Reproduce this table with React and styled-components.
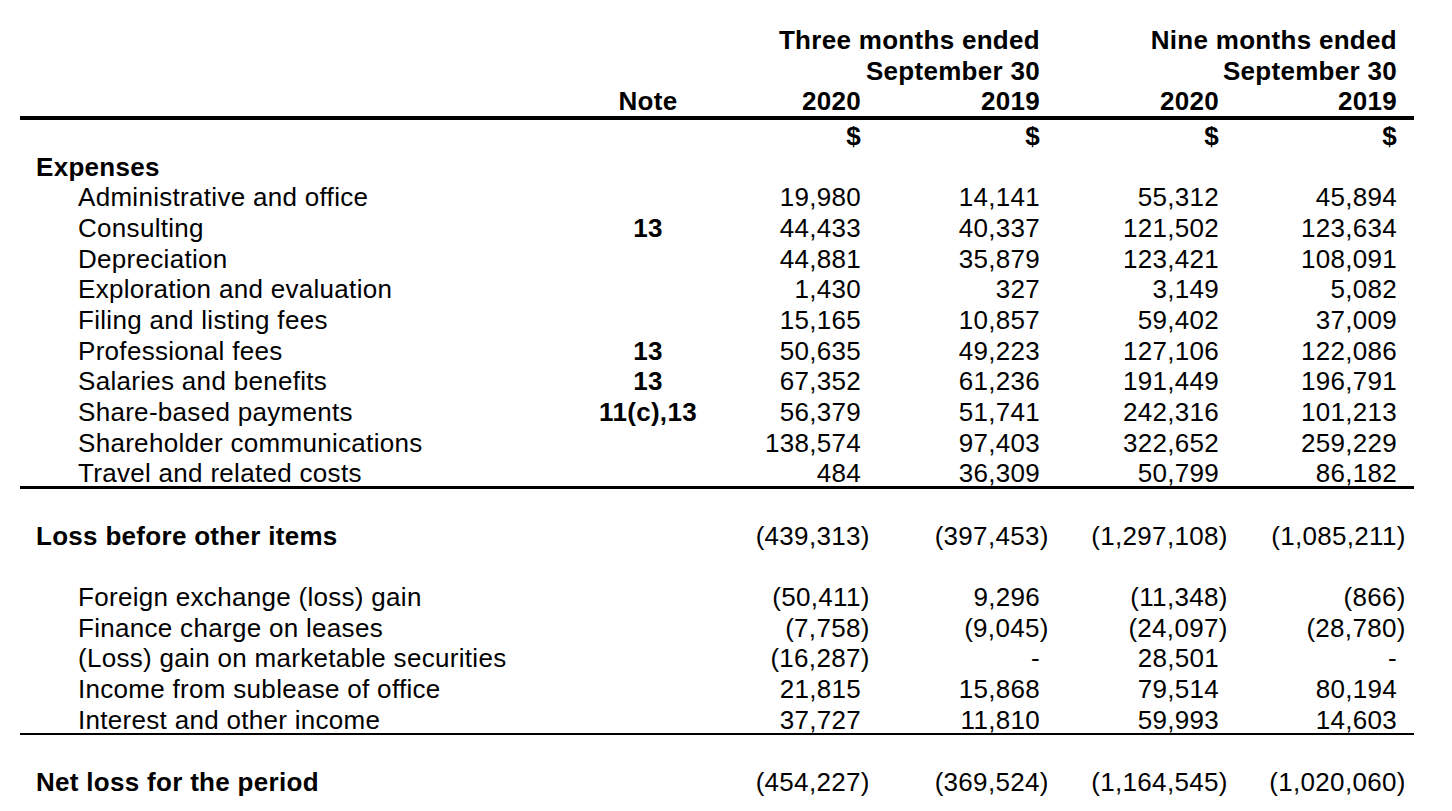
import React from "react";
import styled, { createGlobalStyle } from "styled-components";

const GlobalStyle = createGlobalStyle`
  html, body {
    margin: 0;
    padding: 0;
    background: #ffffff;
  }
  body {
    font-family: "Liberation Sans", Arial, Helvetica, sans-serif;
    color: #000000;
  }
`;

const COLS = "578px 100px 163px 179px 179px 178px";

const Page = styled.div`
  padding: 25px 0 0 20px;
  font-size: 26px;
  line-height: 30.67px;
  letter-spacing: 0.3px;
`;

const Table = styled.div`
  width: 1394px;
  display: flex;
  flex-direction: column;
`;

const Row = styled.div`
  display: grid;
  grid-template-columns: ${COLS};
  padding-right: 17px;
  height: 30.67px;
  margin-top: ${(p) => p.$gap || 0}px;
  white-space: nowrap;
`;

const Label = styled.div`
  padding-left: ${(p) => (p.$indent ? 58 : 16)}px;
  font-weight: ${(p) => (p.$bold ? 700 : 400)};
`;

const Note = styled.div`
  text-align: center;
  font-weight: 700;
`;

const Amount = styled.div`
  text-align: right;
  font-weight: ${(p) => (p.$bold ? 700 : 400)};
`;

const SpanHead = styled.div`
  grid-column: ${(p) => p.$cols};
  text-align: right;
  font-weight: 700;
`;

const Hang = styled.span`
  margin-right: -0.333em;
`;

const Rule = styled.div`
  height: ${(p) => p.$weight}px;
  background: #000000;
  margin-top: ${(p) => p.$offset || 0}px;
`;

const expenses = [
  ["Administrative and office", "", ["19,980", "14,141", "55,312", "45,894"]],
  ["Consulting", "13", ["44,433", "40,337", "121,502", "123,634"]],
  ["Depreciation", "", ["44,881", "35,879", "123,421", "108,091"]],
  ["Exploration and evaluation", "", ["1,430", "327", "3,149", "5,082"]],
  ["Filing and listing fees", "", ["15,165", "10,857", "59,402", "37,009"]],
  ["Professional fees", "13", ["50,635", "49,223", "127,106", "122,086"]],
  ["Salaries and benefits", "13", ["67,352", "61,236", "191,449", "196,791"]],
  ["Share-based payments", "11(c),13", ["56,379", "51,741", "242,316", "101,213"]],
  ["Shareholder communications", "", ["138,574", "97,403", "322,652", "259,229"]],
  ["Travel and related costs", "", ["484", "36,309", "50,799", "86,182"]],
];

const otherItems = [
  ["Foreign exchange (loss) gain", ["(50,411)", "9,296", "(11,348)", "(866)"]],
  ["Finance charge on leases", ["(7,758)", "(9,045)", "(24,097)", "(28,780)"]],
  ["(Loss) gain on marketable securities", ["(16,287)", "-", "28,501", "-"]],
  ["Income from sublease of office", ["21,815", "15,868", "79,514", "80,194"]],
  ["Interest and other income", ["37,727", "11,810", "59,993", "14,603"]],
];

const lossBefore = ["(439,313)", "(397,453)", "(1,297,108)", "(1,085,211)"];
const netLoss = ["(454,227)", "(369,524)", "(1,164,545)", "(1,020,060)"];

function Value({ v, bold }) {
  if (v.endsWith(")")) {
    return (
      <Amount $bold={bold}>
        {v.slice(0, -1)}
        <Hang>)</Hang>
      </Amount>
    );
  }
  return <Amount $bold={bold}>{v}</Amount>;
}

function LineItem({ label, note, values, indent, bold, gap }) {
  return (
    <Row $gap={gap}>
      <Label $indent={indent} $bold={bold}>
        {label}
      </Label>
      <Note>{note}</Note>
      {values.map((v, i) => (
        <Value key={i} v={v} />
      ))}
    </Row>
  );
}

export default function App() {
  return (
    <>
      <GlobalStyle />
      <Page>
        <Table>
          <Row>
            <SpanHead $cols="3 / 5">Three months ended</SpanHead>
            <SpanHead $cols="5 / 7">Nine months ended</SpanHead>
          </Row>
          <Row>
            <SpanHead $cols="3 / 5">September 30</SpanHead>
            <SpanHead $cols="5 / 7">September 30</SpanHead>
          </Row>
          <Row>
            <Label />
            <Note>Note</Note>
            <Amount $bold>2020</Amount>
            <Amount $bold>2019</Amount>
            <Amount $bold>2020</Amount>
            <Amount $bold>2019</Amount>
          </Row>
          <Rule $weight={4} $offset={-1} />
          <Row $gap={1}>
            <Label />
            <Note />
            <Amount $bold>$</Amount>
            <Amount $bold>$</Amount>
            <Amount $bold>$</Amount>
            <Amount $bold>$</Amount>
          </Row>
          <Row>
            <Label $bold>Expenses</Label>
          </Row>
          {expenses.map(([label, note, values]) => (
            <LineItem key={label} label={label} note={note} values={values} indent />
          ))}
          <Rule $weight={3} $offset={-3} />
          <LineItem label="Loss before other items" note="" values={lossBefore} bold gap={32} />
          {otherItems.map(([label, values], i) => (
            <LineItem
              key={label}
              label={label}
              note=""
              values={values}
              indent
              gap={i === 0 ? 30.67 : 0}
            />
          ))}
          <Rule $weight={2} $offset={-2} />
          <LineItem label="Net loss for the period" note="" values={netLoss} bold gap={32} />
        </Table>
      </Page>
    </>
  );
}
